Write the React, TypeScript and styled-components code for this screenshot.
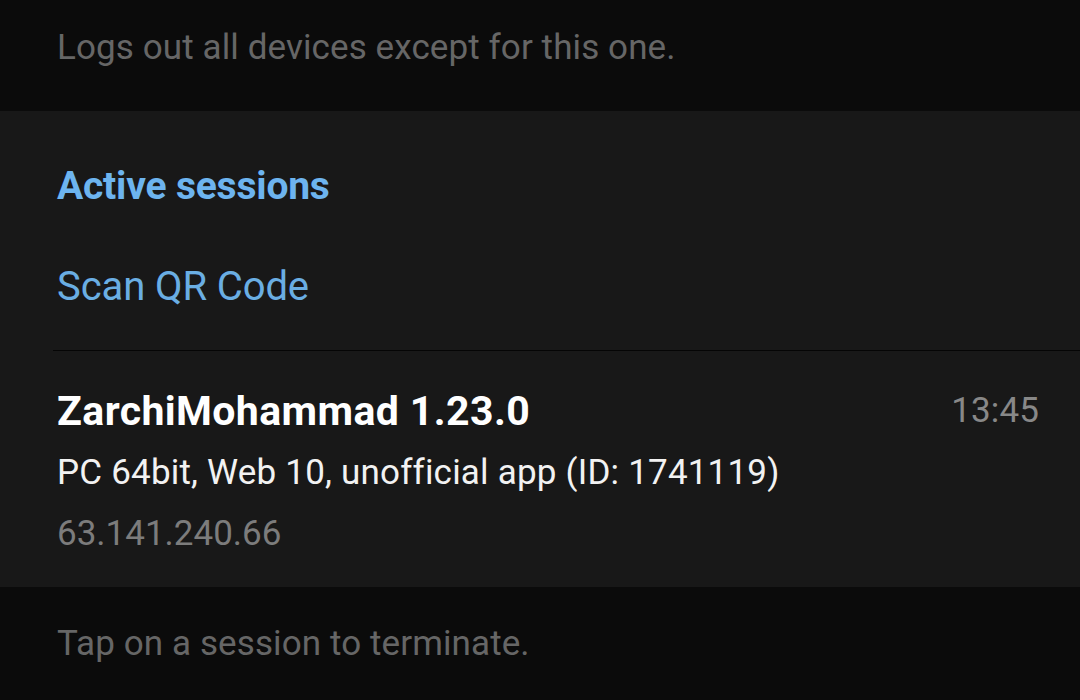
import * as React from "react";
import styled, { createGlobalStyle } from "styled-components";

const GlobalStyle = createGlobalStyle`
  html, body {
    margin: 0;
    padding: 0;
    background: #0b0b0b;
  }
  body {
    font-family: Roboto, "Noto Sans", "Liberation Sans", sans-serif;
    -webkit-font-smoothing: antialiased;
  }
`;

type Session = {
  title: string;
  details: string;
  ip: string;
  time: string;
};

const sessions: Session[] = [
  {
    title: "ZarchiMohammad 1.23.0",
    details: "PC 64bit, Web 10, unofficial app (ID: 1741119)",
    ip: "63.141.240.66",
    time: "13:45",
  },
];

export default function App() {
  return (
    <>
      <GlobalStyle />
      <Screen>
        <Hint $height={111} $offset={-8}>
          Logs out all devices except for this one.
        </Hint>
        <Panel>
          <SectionTitle>Active sessions</SectionTitle>
          <ActionRow>Scan QR Code</ActionRow>
          <Divider />
          {sessions.map((s) => (
            <SessionRow key={s.title}>
              <SessionInfo>
                <SessionTitle>{s.title}</SessionTitle>
                <SessionDetails>{s.details}</SessionDetails>
                <SessionIp>{s.ip}</SessionIp>
              </SessionInfo>
              <SessionTime>{s.time}</SessionTime>
            </SessionRow>
          ))}
        </Panel>
        <Hint $height={113} $offset={0}>
          Tap on a session to terminate.
        </Hint>
      </Screen>
    </>
  );
}

const Screen = styled.div`
  width: 1080px;
  height: 700px;
  overflow: hidden;
  display: flex;
  flex-direction: column;
  background: #0b0b0b;
`;

const Hint = styled.div<{ $height: number; $offset: number }>`
  height: ${(p) => p.$height}px;
  flex-shrink: 0;
  display: flex;
  align-items: center;
  padding: 0 57px;
  margin-top: ${(p) => p.$offset}px;
  margin-bottom: ${(p) => -p.$offset}px;
  font-size: 35px;
  letter-spacing: 0.1px;
  color: #666666;
  font-weight: 400;
`;

const Panel = styled.div`
  background: #181818;
  height: 476px;
  flex-shrink: 0;
  display: flex;
  flex-direction: column;
`;

const SectionTitle = styled.div`
  height: 70px;
  margin-top: 40px;
  display: flex;
  align-items: center;
  padding: 0 57px;
  font-size: 39px;
  font-weight: 700;
  color: #6db4ef;
  letter-spacing: -0.2px;
`;

const ActionRow = styled.div`
  height: 100px;
  display: flex;
  align-items: center;
  padding: 0 57px;
  margin-top: 15px;
  font-size: 40px;
  color: #6aaee3;
  letter-spacing: -0.1px;
  cursor: pointer;
`;

const Divider = styled.div`
  height: 1px;
  margin-top: 14px;
  margin-left: 53px;
  background: #050505;
`;

const SessionRow = styled.div`
  display: flex;
  align-items: flex-start;
  justify-content: space-between;
  padding: 29px 41px 0 57px;
`;

const SessionInfo = styled.div`
  display: flex;
  flex-direction: column;
`;

const SessionTitle = styled.div`
  height: 63px;
  line-height: 62px;
  font-size: 41px;
  font-weight: 700;
  color: #ffffff;
  letter-spacing: 0.4px;
`;

const SessionDetails = styled.div`
  height: 61px;
  line-height: 60px;
  font-size: 35px;
  color: #f2f2f2;
  letter-spacing: 0.2px;
`;

const SessionIp = styled.div`
  height: 60px;
  line-height: 60px;
  font-size: 35px;
  color: #7c7c7c;
  letter-spacing: 0;
`;

const SessionTime = styled.div`
  height: 62px;
  line-height: 62px;
  font-size: 35px;
  color: #888888;
  letter-spacing: 0.1px;
`;
